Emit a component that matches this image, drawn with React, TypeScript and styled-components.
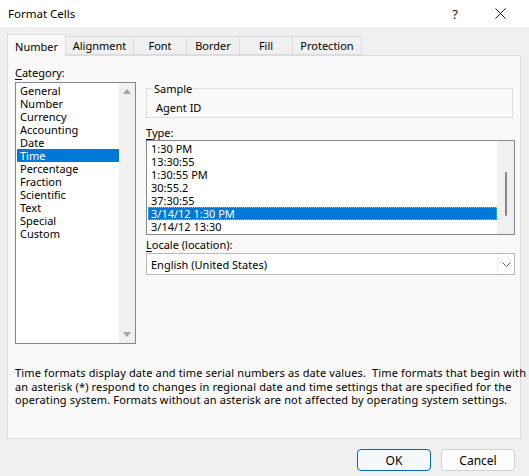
import { createGlobalStyle, styled } from 'styled-components';

const GlobalStyle = createGlobalStyle`
  body {
    margin: 0;
    font-family: 'Noto Sans', 'Open Sans', sans-serif;
    font-size: 11px;
    color: #000;
  }
  * { box-sizing: border-box; }
`;

const Window = styled.div`
  width: 529px;
  height: 476px;
  background: #f0f0f0;
  display: flex;
  flex-direction: column;
  overflow: hidden;
`;

const TitleBar = styled.div`
  height: 27px;
  background: #fff;
  display: flex;
  align-items: center;
  padding: 0 17px 0 8px;
`;

const TitleText = styled.span`
  font-size: 11.5px;
  flex: 1;
`;

const TitleButton = styled.span`
  display: flex;
  align-items: center;
  justify-content: center;
  width: 24px;
  margin-left: 21px;
  font-size: 13px;
  color: #1a1a1a;
`;

const Body = styled.div`
  padding: 7px 8px 0 7px;
  display: flex;
  flex-direction: column;
`;

const TabStrip = styled.div`
  display: flex;
  align-items: flex-end;
  height: 21px;
  position: relative;
  z-index: 1;
`;

const Tab = styled.div<{ $active?: boolean; $width: number }>`
  width: ${({ $width }) => $width}px;
  height: ${({ $active }) => ($active ? 22 : 19)}px;
  margin-bottom: ${({ $active }) => ($active ? -1 : 0)}px;
  margin-left: ${({ $active }) => ($active ? 0 : -1)}px;
  border: 1px solid #dcdcdc;
  border-bottom: ${({ $active }) => ($active ? 'none' : '1px solid #dcdcdc')};
  background: ${({ $active }) => ($active ? '#f9f9f9' : '#f0f0f0')};
  display: flex;
  align-items: flex-end;
  justify-content: center;
  padding-bottom: ${({ $active }) => ($active ? 3 : 2)}px;
  line-height: 13px;
  &:first-child {
    margin-left: 0;
  }
`;

const Panel = styled.div`
  height: 384px;
  border: 1px solid #dcdcdc;
  background: #f9f9f9;
  padding: 10px 5px 0 7px;
  display: flex;
  flex-direction: column;
`;

const Columns = styled.div`
  display: grid;
  grid-template-columns: 121px 1fr;
  column-gap: 10px;
`;

const Column = styled.div<{ $top?: number }>`
  display: flex;
  flex-direction: column;
  padding-top: ${({ $top }) => $top ?? 0}px;
`;

const FieldLabel = styled.div<{ $gap?: number; $top?: number }>`
  line-height: 13px;
  margin-top: ${({ $top }) => $top ?? 0}px;
  margin-bottom: ${({ $gap }) => $gap ?? 2}px;
  u {
    text-decoration-thickness: 1px;
    text-underline-offset: 2px;
  }
`;

const ListBox = styled.div<{ $height: number; $bar: number }>`
  height: ${({ $height }) => $height}px;
  border: 1px solid #828790;
  background: #fff;
  display: grid;
  grid-template-columns: 1fr ${({ $bar }) => $bar}px;
`;

const ListItems = styled.div`
  padding: 1px 0 0 1px;
  display: flex;
  flex-direction: column;
  overflow: hidden;
`;

const ListRow = styled.div<{ $selected?: boolean; $focus?: boolean }>`
  height: 13px;
  padding-left: ${({ $focus }) => ($focus ? 2 : 3)}px;
  white-space: nowrap;
  background: ${({ $selected }) => ($selected ? '#0078d7' : 'transparent')};
  color: ${({ $selected }) => ($selected ? '#fff' : '#000')};
  border: ${({ $focus }) => ($focus ? '1px dotted #e6a33c' : 'none')};
  line-height: ${({ $focus }) => ($focus ? 11 : 13)}px;
`;

const ArrowBar = styled.div`
  background: #f0f0f0;
  display: flex;
  flex-direction: column;
  justify-content: space-between;
  align-items: center;
  padding: 6px 0 6px;
`;

const ThinBar = styled.div`
  background: #f0f0f0;
  display: flex;
  justify-content: center;
  padding-top: 31px;
`;

const Thumb = styled.div`
  width: 2px;
  height: 44px;
  border-radius: 1px;
  background: #858585;
`;

const GroupBox = styled.fieldset`
  margin: 0 2px 0 0;
  padding: 0 0 3px 6px;
  border: 1px solid #dcdcdc;
  min-width: 0;
`;

const Legend = styled.legend`
  padding: 0 1px;
  line-height: 13px;
`;

const SampleText = styled.div`
  margin: 6px 0 0 3px;
  line-height: 13px;
`;

const Select = styled.div`
  height: 22px;
  border: 1px solid #b8b8b8;
  background: #fff;
  display: grid;
  grid-template-columns: 1fr 17px;
  align-items: stretch;
`;

const SelectValue = styled.div`
  display: flex;
  align-items: center;
  padding-left: 4px;
  padding-top: 1px;
`;

const ChevronBox = styled.div`
  display: flex;
  align-items: center;
  justify-content: center;
  border-left: 1px solid #eeeeee;
`;

const Description = styled.div`
  margin-top: 22px;
  line-height: 13.5px;
  letter-spacing: 0.14px;
  white-space: nowrap;
`;

const Footer = styled.div`
  display: flex;
  justify-content: flex-end;
  gap: 10px;
  padding: 10px 6px 0 0;
`;

const Button = styled.button<{ $primary?: boolean }>`
  width: 74px;
  height: 22px;
  font: inherit;
  font-size: 12px;
  color: #000;
  border-radius: 4px;
  border: 1px solid ${({ $primary }) => ($primary ? '#0067c0' : '#d0d0d0')};
  background: ${({ $primary }) => ($primary ? '#f5f9fd' : '#fdfdfd')};
  padding: 0;
`;

const categories = [
  'General',
  'Number',
  'Currency',
  'Accounting',
  'Date',
  'Time',
  'Percentage',
  'Fraction',
  'Scientific',
  'Text',
  'Special',
  'Custom',
];

const types = ['1:30 PM', '13:30:55', '1:30:55 PM', '30:55.2', '37:30:55', '3/14/12 1:30 PM', '3/14/12 13:30'];

const tabs: [string, number][] = [
  ['Number', 59],
  ['Alignment', 69],
  ['Font', 54],
  ['Border', 54],
  ['Fill', 54],
  ['Protection', 70],
];

const Triangle = ({ down }: { down?: boolean }) => (
  <svg width="8" height="5" viewBox="0 0 8 5">
    <path d={down ? 'M0 0 L8 0 L4 5 Z' : 'M0 5 L8 5 L4 0 Z'} fill="#a3a3a3" />
  </svg>
);

const App = () => {
  return (
    <>
      <GlobalStyle />
      <Window>
        <TitleBar>
          <TitleText>Format Cells</TitleText>
          <TitleButton>?</TitleButton>
          <TitleButton>
            <svg width="11" height="11" viewBox="0 0 11 11">
              <path d="M0.5 0.5 L10.5 10.5 M10.5 0.5 L0.5 10.5" stroke="#1a1a1a" strokeWidth="1" />
            </svg>
          </TitleButton>
        </TitleBar>

        <Body>
          <TabStrip>
            {tabs.map(([label, width], i) => (
              <Tab key={label} $width={width} $active={i === 0}>
                {label}
              </Tab>
            ))}
          </TabStrip>

          <Panel>
            <Columns>
              <Column>
                <FieldLabel $gap={3}>
                  <u>C</u>ategory:
                </FieldLabel>
                <ListBox $height={262} $bar={16}>
                  <ListItems>
                    {categories.map((c) => (
                      <ListRow key={c} $selected={c === 'Time'}>
                        {c}
                      </ListRow>
                    ))}
                  </ListItems>
                  <ArrowBar>
                    <Triangle />
                    <Triangle down />
                  </ArrowBar>
                </ListBox>
              </Column>

              <Column $top={16}>
                <GroupBox>
                  <Legend>Sample</Legend>
                  <SampleText>Agent ID</SampleText>
                </GroupBox>

                <FieldLabel $gap={1} $top={8}>
                  <u>T</u>ype:
                </FieldLabel>
                <ListBox $height={95} $bar={17}>
                  <ListItems>
                    {types.map((t, i) => (
                      <ListRow key={t} $selected={i === 5} $focus={i === 5}>
                        {t}
                      </ListRow>
                    ))}
                  </ListItems>
                  <ThinBar>
                    <Thumb />
                  </ThinBar>
                </ListBox>

                <FieldLabel $gap={2} $top={3}>
                  <u>L</u>ocale (location):
                </FieldLabel>
                <Select>
                  <SelectValue>English (United States)</SelectValue>
                  <ChevronBox>
                    <svg width="9" height="5" viewBox="0 0 9 5">
                      <path d="M0.5 0.5 L4.5 4.5 L8.5 0.5" fill="none" stroke="#606060" strokeWidth="1" />
                    </svg>
                  </ChevronBox>
                </Select>
              </Column>
            </Columns>

            <Description>
              Time formats display date and time serial numbers as date values.&nbsp; Time formats that begin with
              <br />
              an asterisk (*) respond to changes in regional date and time settings that are specified for the
              <br />
              operating system. Formats without an asterisk are not affected by operating system settings.
            </Description>
          </Panel>

          <Footer>
            <Button $primary>OK</Button>
            <Button>Cancel</Button>
          </Footer>
        </Body>
      </Window>
    </>
  );
};

export default App;
